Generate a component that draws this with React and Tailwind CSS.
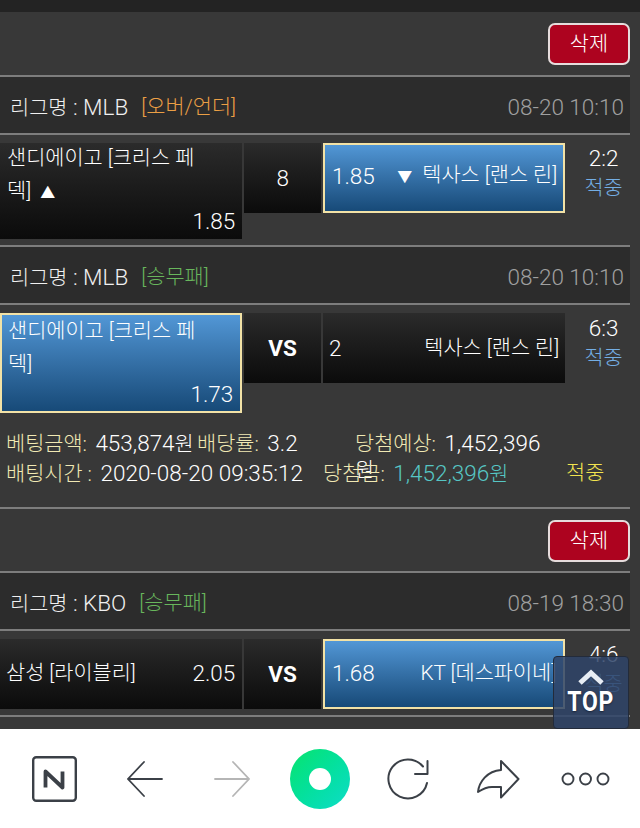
import React from "react";

const CELL_DARK = "bg-gradient-to-b from-[#2b2b2b] to-[#0b0b0b]";
const CELL_BLUE =
  "bg-gradient-to-b from-[#5297d6] to-[#174a78] border-2 border-[#f2e2a6]";
const FONT = { fontFamily: 'Roboto,"Noto Sans CJK KR",sans-serif' };

// hangul runs a little smaller than the digits next to it
const Ko = ({ children, className = "" }) => (
  <span className={`text-[20.8px] ${className}`}>{children}</span>
);

const DeleteBar = ({ height }) => (
  <div className={`${height} flex justify-end items-start pt-[11px] pr-[10px]`}>
    <button className="w-[82px] h-[42px] rounded-[7px] border-2 border-[#e6dcdc] bg-[#ad031f] text-white">
      <Ko>삭제</Ko>
    </button>
  </div>
);

const LeagueHeader = ({ league, type, typeColor, time }) => (
  <div className="w-[630px] h-[60px] border-y-2 border-[#7d7d7d] bg-[#2c2c2c] flex items-center justify-between pl-[10px] pr-[6px] pt-[5px]">
    <div className="flex items-center gap-[13px]">
      <span className="text-[#f0f0f0]"><Ko>리그명</Ko> : {league}</span>
      <Ko className={typeColor}>[{type}]</Ko>
    </div>
    <span className="text-[#a0a0a0]">{time}</span>
  </div>
);

const Result = ({ score }) => (
  <div className="w-[73px] flex flex-col items-center">
    <span className="text-white h-[30px] leading-[30px]">{score}</span>
    <Ko className="text-[#74aee4] h-[31px] leading-[31px]">적중</Ko>
  </div>
);

const Label = ({ children }) => <Ko className="text-[#f1e9b4] mr-[3px]">{children}</Ko>;

const App = () => (
  <div className="h-[828px] w-[640px] flex flex-col overflow-hidden relative bg-white text-[22.5px] font-light leading-[33px]" style={FONT}>
    <div className="h-[729px] overflow-hidden bg-[#383838] border-t-[12px] border-[#232323]">
      <DeleteBar height="h-[63px]" />

      {/* first bet */}
      <LeagueHeader league="MLB" type="오버/언더" typeColor="text-[#eb9f45]" time="08-20 10:10" />
      <div className="flex items-start gap-[2px] pt-[8px] pb-[6px]">
        <div className={`w-[243px] h-[96px] ${CELL_DARK} pl-[7px] pr-[7px] text-white flex flex-col`}>
          <div className="h-[63px] pr-[18px] -mt-[1px] text-[20.8px]">샌디에이고 [크리스 페 덱] <span className="text-[15px] ml-[4px]">▲</span></div>
          <div className="text-right">1.85</div>
        </div>
        <div className={`w-[77px] h-[70px] ${CELL_DARK} flex items-center justify-center text-white`}>8</div>
        <div className={`w-[243px] h-[70px] ${CELL_BLUE} flex items-center justify-between pl-[7px] pr-[6px] pb-[3px] text-white`}>
          <span>1.85</span>
          <Ko><span className="text-[15px] mr-[5px]">▼</span> 텍사스 [랜스 린]</Ko>
        </div>
        <Result score="2:2" />
      </div>

      {/* second bet */}
      <LeagueHeader league="MLB" type="승무패" typeColor="text-[#68b65c]" time="08-20 10:10" />
      <div className="flex items-start gap-[2px] pt-[8px]">
        <div className={`w-[243px] h-[100px] ${CELL_BLUE} pl-[6px] pr-[7px] text-white flex flex-col`}>
          <div className="h-[63px] pr-[18px] text-[20.8px]">샌디에이고 [크리스 페 덱]</div>
          <div className="text-right">1.73</div>
        </div>
        <div className={`w-[77px] h-[70px] ${CELL_DARK} flex items-center justify-center text-white font-bold`}>VS</div>
        <div className={`w-[243px] h-[70px] ${CELL_DARK} flex items-center justify-between pl-[6px] pr-[6px] text-white`}>
          <span>2</span>
          <Ko>텍사스 [랜스 린]</Ko>
        </div>
        <Result score="6:3" />
      </div>

      {/* bet summary */}
      <div className="h-[96px] pt-[18px] pl-[6px] text-white border-b-2 border-[#7d7d7d] w-[630px]">
        <div className="flex h-[27px] leading-[25px]">
          <div className="w-[191px] whitespace-nowrap"><Label>베팅금액:</Label> 453,874<Ko>원</Ko></div>
          <div className="w-[158px]"><Label>배당률:</Label> 3.2</div>
          <div className="w-[190px]"><Label>당첨예상:</Label> 1,452,396 <Ko>원</Ko></div>
        </div>
        <div className="flex h-[30px] leading-[31px]">
          <div className="w-[317px]"><Label>배팅시간 :</Label> 2020-08-20 09:35:12</div>
          <div className="w-[243px]"><Label>당첨금:</Label> <span className="text-[#56c6c4]">1,452,396<Ko>원</Ko></span></div>
          <Ko className="text-[#f2e34f]">적중</Ko>
        </div>
      </div>

      {/* third bet */}
      <DeleteBar height="h-[62px]" />
      <LeagueHeader league="KBO" type="승무패" typeColor="text-[#68b65c]" time="08-19 18:30" />
      <div className="flex items-start gap-[2px] pt-[8px] pb-[6px]">
        <div className={`w-[243px] h-[70px] ${CELL_DARK} flex items-center justify-between pl-[6px] pr-[7px] pb-[1px] text-white`}>
          <Ko>삼성 [라이블리]</Ko>
          <span>2.05</span>
        </div>
        <div className={`w-[77px] h-[70px] ${CELL_DARK} flex items-center justify-center text-white font-bold`}>VS</div>
        <div className={`w-[243px] h-[70px] ${CELL_BLUE} flex items-center justify-between pl-[7px] pr-[7px] pb-[2px] text-white whitespace-nowrap overflow-hidden`}>
          <span>1.68</span>
          <Ko>KT [데스파이네]</Ko>
        </div>
        <Result score="4:6" />
      </div>
      <div className="w-[630px] h-[2px] bg-[#7d7d7d]" />
    </div>

    {/* scroll to top */}
    <button className="absolute left-[553px] top-[656px] w-[76px] h-[73px] rounded-[4px] bg-[#2f4468]/85 border border-[#232b3a] flex flex-col items-center text-white font-bold text-[27px] leading-[24px] pt-[12px]">
      <svg width="26" height="16" viewBox="0 0 26 16" fill="none" stroke="#e8edf4" strokeWidth="5">
        <path d="M2 14L13 4L24 14" />
      </svg>
      <span className="scale-x-[0.85] tracking-[1px] mt-[5px] [text-shadow:0_1px_2px_#1a2538]">TOP</span>
    </button>

    {/* browser toolbar */}
    <div className="h-[99px] flex items-center pl-[32px]">
      <svg width="45" height="46" viewBox="0 0 45 46" fill="none">
        <rect x="1.2" y="1.2" width="42.6" height="43.6" rx="3" stroke="#3b4047" strokeWidth="2.4" />
        <path d="M13.5 31.5V15.5L30.5 31.5V15.5" stroke="#3b4047" strokeWidth="3.8" strokeLinejoin="round" />
      </svg>
      <svg className="ml-[50px]" width="36" height="36" viewBox="0 0 36 36" fill="none" stroke="#3b4047" strokeWidth="1.8" strokeLinecap="round">
        <path d="M1 18H35M17 1L1 18L17 35" />
      </svg>
      <svg className="ml-[51px]" width="36" height="36" viewBox="0 0 36 36" fill="none" stroke="#b5b5b5" strokeWidth="1.8" strokeLinecap="round">
        <path d="M1 18H35M19 1L35 18L19 35" />
      </svg>
      <div className="ml-[40px] w-[60px] h-[60px] rounded-full bg-gradient-to-br from-[#0be36a] to-[#10dcc8] flex items-center justify-center">
        <div className="w-[22px] h-[22px] rounded-full bg-white" />
      </div>
      <svg className="ml-[37px]" width="42" height="42" viewBox="387 758 42 42" fill="none" stroke="#3b4047" strokeWidth="2" strokeLinecap="round" strokeLinejoin="round">
        <path d="M427 783A19.5 19.5 0 1 1 423 766.5" />
        <path d="M427.5 761V774H415" />
      </svg>
      <svg className="ml-[47px]" width="44" height="40" viewBox="476 759 44 40" fill="none" stroke="#3b4047" strokeWidth="2" strokeLinejoin="round">
        <path d="M501 761L518.5 779L501 797.5V787H492C486 787 481 790 478 792C479 782 487 771 501 770Z" />
      </svg>
      <svg className="ml-[41px]" width="50" height="14" viewBox="0 0 50 14" fill="none" stroke="#3b4047" strokeWidth="1.9">
        <circle cx="7" cy="7" r="5.5" />
        <circle cx="24.5" cy="7" r="5.5" />
        <circle cx="42" cy="7" r="5.5" />
      </svg>
    </div>
  </div>
);

export default App;
